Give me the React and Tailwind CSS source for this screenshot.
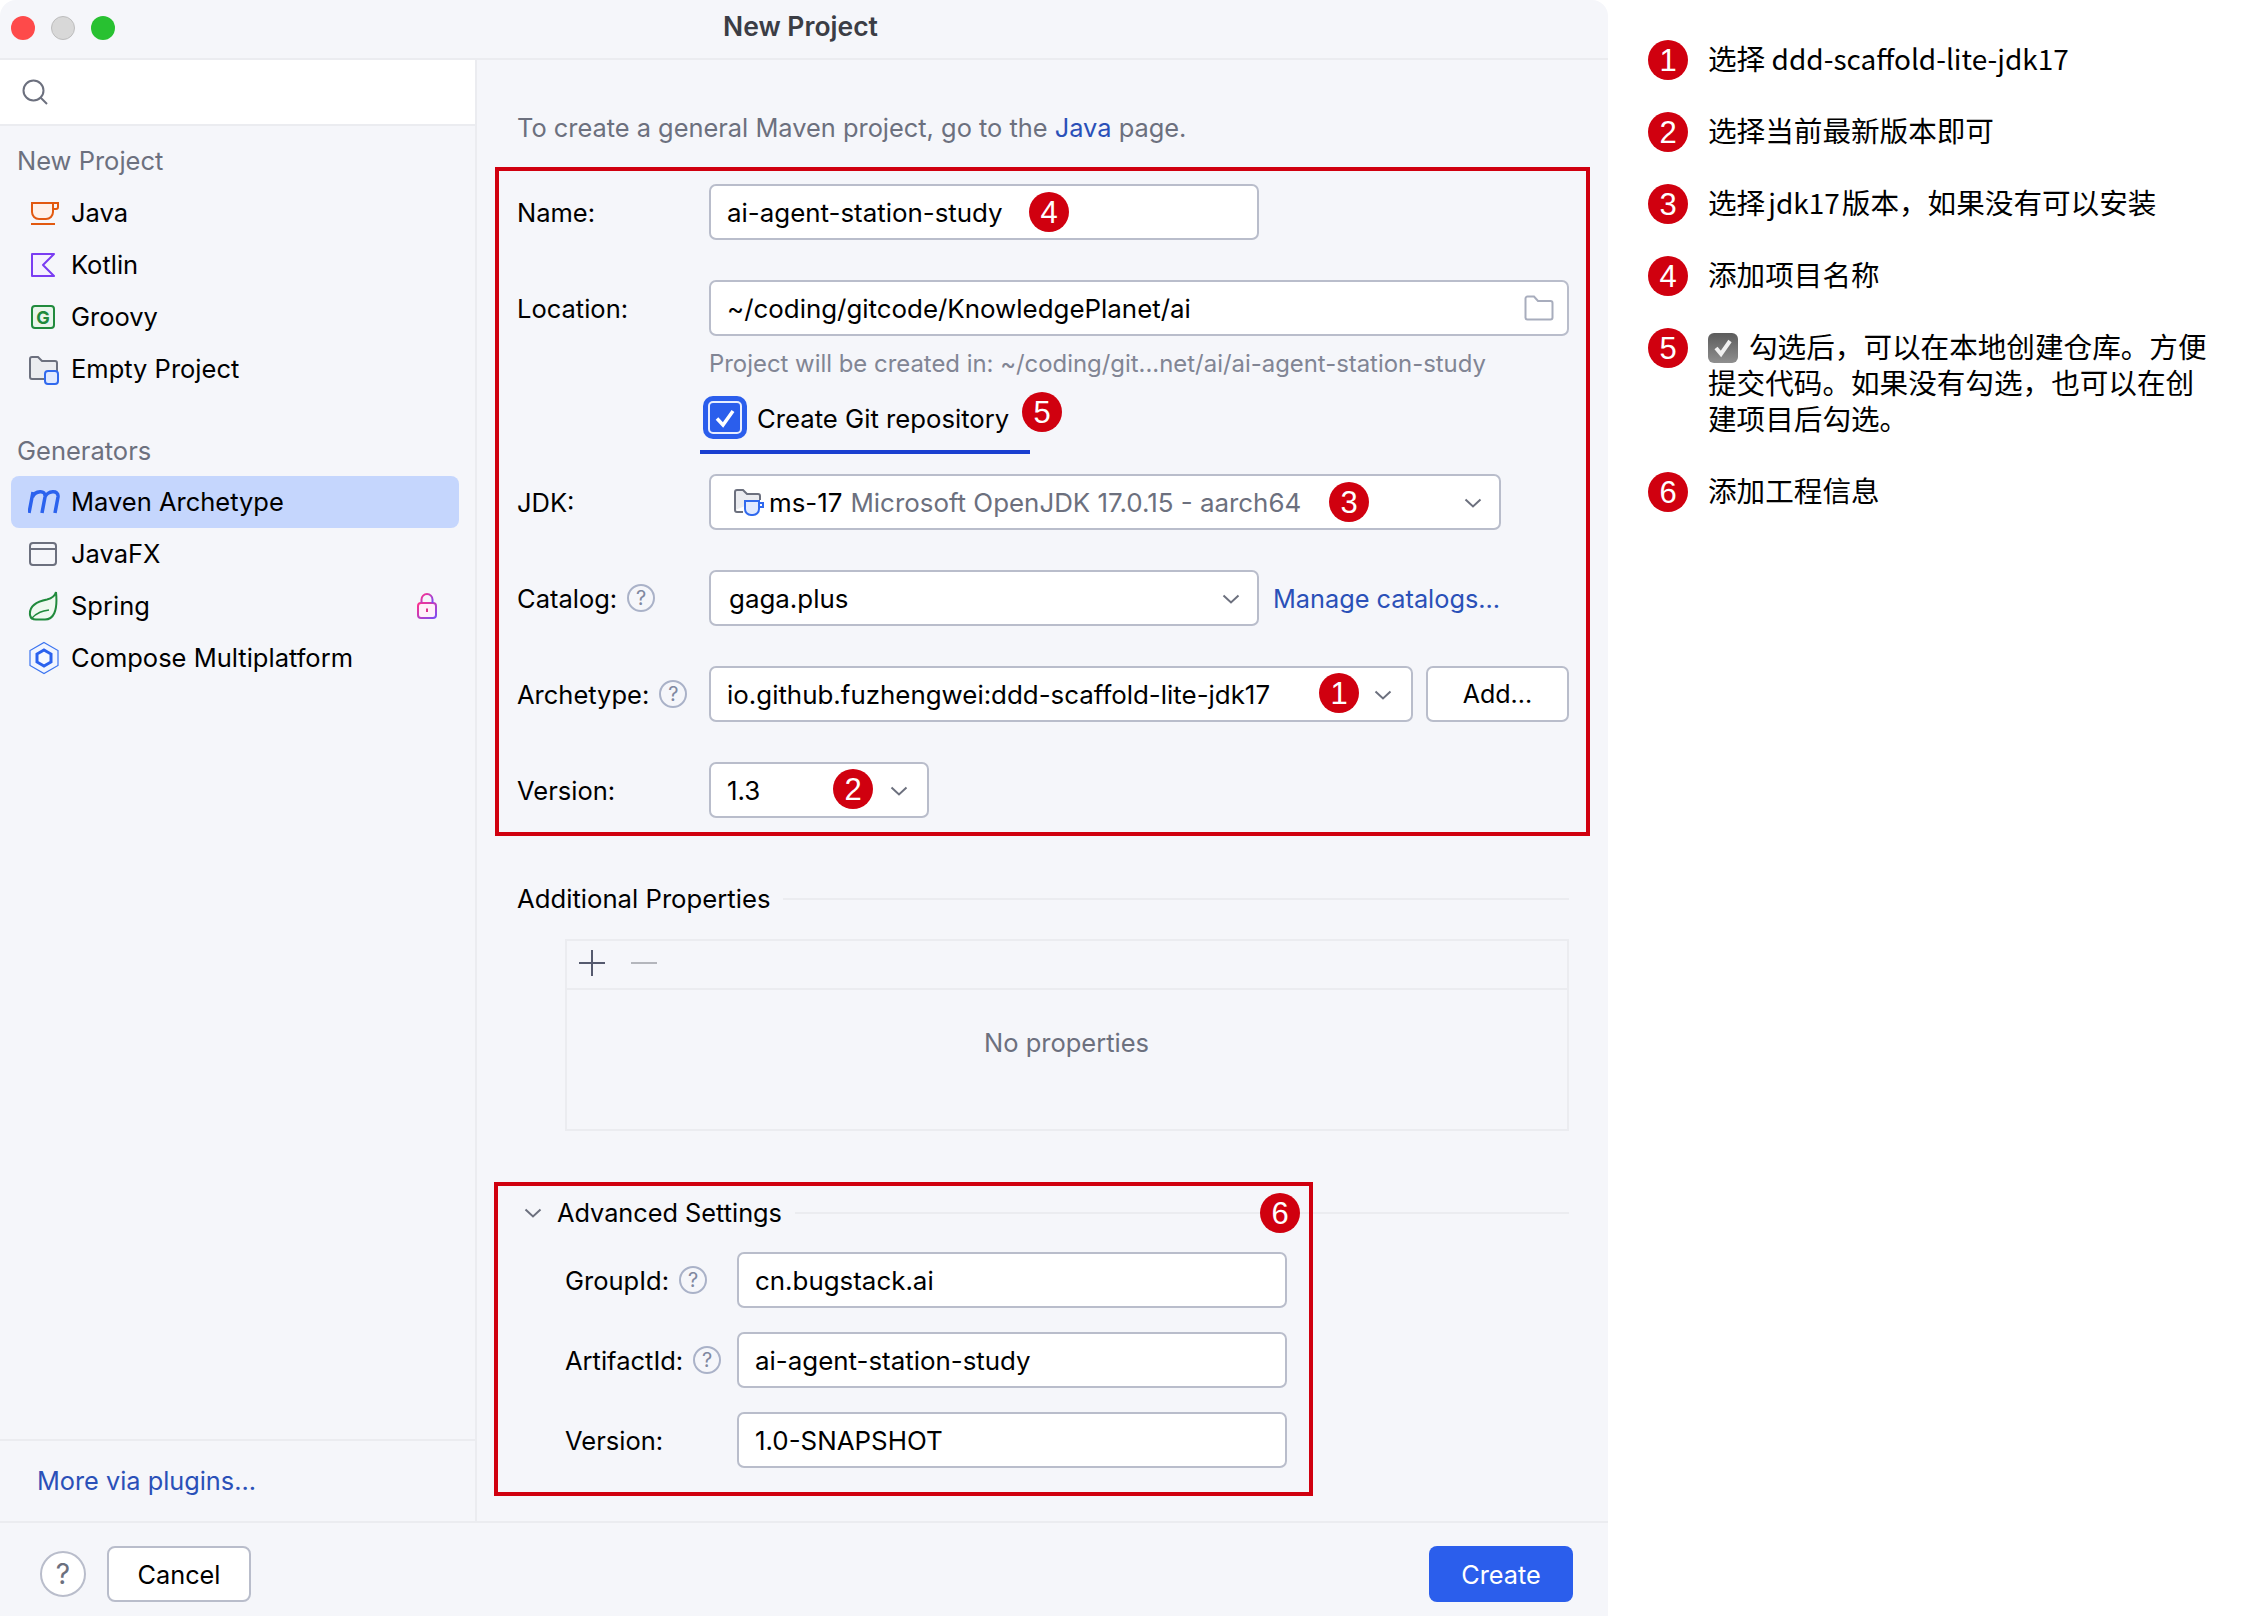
import React from 'react';

const Badge = ({ n, className = '' }) => (
  <div className={`w-[40px] h-[40px] rounded-full bg-[#d0000f] text-white flex items-center justify-center text-[31px] leading-none font-['Liberation_Sans',sans-serif] shrink-0 ${className}`}>
    {n}
  </div>
);

const Chevron = ({ className = '' }) => (
  <svg width="18" height="10" viewBox="0 0 18 10" fill="none" className={className}>
    <path d="M1.5 1.5 L9 8.5 L16.5 1.5" stroke="#6c707e" strokeWidth="2" />
  </svg>
);

const Help = ({ className = '' }) => (
  <div className={`w-[28px] h-[28px] rounded-full border-2 border-[#aab2c8] text-[#8088a0] text-[20px] leading-none flex items-center justify-center shrink-0 ${className}`}>?</div>
);

const Field = ({ className = '', children }) => (
  <div className={`h-[56px] pt-[2px] rounded-[7px] border-2 border-[#b9bdcb] bg-white flex items-center text-[25.9px] text-black shrink-0 ${className}`}>
    {children}
  </div>
);

const Row = ({ label, help, children }) => (
  <div className="flex items-center h-[56px]">
    <div className="w-[192px] flex items-center text-[25.5px] text-black shrink-0">
      <span className="pt-[3px]">{label}</span>
      {help && <Help className="ml-[10px]" />}
    </div>
    {children}
  </div>
);

const SubRow = ({ label, help, value }) => (
  <div className="flex items-center h-[56px] pl-[48px]">
    <div className="w-[172px] flex items-center text-[25.5px] text-black shrink-0">
      <span className="pt-[3px]">{label}</span>
      {help && <Help className="ml-[10px]" />}
    </div>
    <Field className="w-[550px] pl-[16px]">{value}</Field>
  </div>
);

const JavaIcon = () => (
  <svg width="32" height="28" viewBox="0 0 32 28" fill="none">
    <path d="M4 4 H25 V13 a7 7 0 0 1 -7 7 H11 a7 7 0 0 1 -7 -7 Z" fill="#fff1e8" stroke="#e2590f" strokeWidth="2" />
    <path d="M25 4 H30 V8 a2 2 0 0 1 -2 2 H25" stroke="#e2590f" strokeWidth="2" />
    <path d="M3 25 H27" stroke="#e2590f" strokeWidth="2" />
  </svg>
);

const KotlinIcon = () => (
  <svg width="32" height="28" viewBox="0 0 32 28" fill="none">
    <path d="M4 3 H26 L15 14 L26 25 H4 Z" fill="#f5f0ff" stroke="#7a3cf2" strokeWidth="2" strokeLinejoin="round" />
  </svg>
);

const GroovyIcon = () => (
  <svg width="32" height="28" viewBox="0 0 32 28" fill="none">
    <rect x="4" y="3" width="22" height="22" rx="3" fill="#e9f5eb" stroke="#208a3c" strokeWidth="2" />
    <text x="15" y="20.5" textAnchor="middle" fontSize="18" fontWeight="700" fill="#208a3c" fontFamily="Inter">G</text>
  </svg>
);

const EmptyIcon = () => (
  <svg width="32" height="32" viewBox="0 0 32 32" fill="none" className="mt-[4px]">
    <path d="M2 21 V4 a2 2 0 0 1 2 -2 H10 L14 6 H27 a2 2 0 0 1 2 2 V24 H4 a2 2 0 0 1 -2 -2 Z" fill="#ebecf0" stroke="#6c707e" strokeWidth="2" />
    <rect x="17" y="16" width="13" height="13" rx="3" fill="#e0e9ff" stroke="#3069ee" strokeWidth="2" />
  </svg>
);

const MavenIcon = () => (
  <svg width="32" height="28" viewBox="0 0 32 28" fill="none">
    <path d="M1 25 L5 4 M4.500 9 C7 3 18 1 17 9 L14 25 M17 9 C19 3 31 1 30 9 L27 25" stroke="#2b62ee" strokeWidth="3.500" />
  </svg>
);

const FxIcon = () => (
  <svg width="32" height="28" viewBox="0 0 32 28" fill="none">
    <rect x="2" y="3" width="26" height="22" rx="3" stroke="#6c707e" strokeWidth="2" />
    <path d="M2 9 H28" stroke="#6c707e" strokeWidth="2" />
  </svg>
);

const SpringIcon = () => (
  <svg width="32" height="32" viewBox="0 0 32 32" fill="none">
    <path d="M28 2 C27 6 25 8 19 9.500 C9 11.500 1 16 2 25 C2.500 28 5 29.500 8 29.500 H17 C25 29.500 30 22 28 2 Z" fill="#eff9f0" stroke="#208a3c" strokeWidth="2" />
    <path d="M3 29 C9 22 15 21 21 20" stroke="#208a3c" strokeWidth="1.500" />
  </svg>
);

const ComposeIcon = () => (
  <svg width="32" height="34" viewBox="0 0 32 34" fill="none">
    <path d="M16 1.500 L30 9.500 V24.500 L16 32.500 L2 24.500 V9.500 Z" fill="#f1f5ff" stroke="#3a73f0" strokeWidth="1.200" />
    <path d="M16 9 L23 13 V21 L16 25 L9 21 V13 Z" fill="#f7f9ff" stroke="#2b62ee" strokeWidth="3" />
  </svg>
);

const LockIcon = () => (
  <svg width="20" height="26" viewBox="0 0 20 26" fill="none">
    <defs>
      <linearGradient id="lockg" x1="0" y1="0" x2="1" y2="1">
        <stop offset="0" stopColor="#ff318c" />
        <stop offset="1" stopColor="#7a4cf5" />
      </linearGradient>
    </defs>
    <rect x="1" y="10" width="18" height="15" rx="3" fill="#fff0fa" stroke="url(#lockg)" strokeWidth="2" />
    <path d="M4.500 10 V6.500 a5.500 5.500 0 0 1 11 0 V10" stroke="url(#lockg)" strokeWidth="2" />
    <path d="M10 15.500 V19" stroke="#e0318c" strokeWidth="2" />
  </svg>
);

const items1 = [
  ['Java', <JavaIcon />],
  ['Kotlin', <KotlinIcon />],
  ['Groovy', <GroovyIcon />],
  ['Empty Project', <EmptyIcon />],
];
const items2 = [
  ['Maven Archetype', <MavenIcon />, true],
  ['JavaFX', <FxIcon />],
  ['Spring', <SpringIcon />],
  ['Compose Multiplatform', <ComposeIcon />],
];

const NavItem = ({ name, icon, active, lock }) => (
  <div className={`h-[52px] ml-[11px] mr-[16px] rounded-[8px] flex items-center pl-[17px] gap-[11px] text-[25.5px] text-black ${active ? 'bg-[#c5d6fd]' : ''}`}>
    <div className="w-[32px] flex items-center justify-center shrink-0">{icon}</div>
    <span className="flex-1 pt-[1px]">{name}</span>
    {lock && <div className="mr-[22px] flex"><LockIcon /></div>}
  </div>
);

const Sidebar = () => (
  <div className="w-[477px] border-r-2 border-[#ebecf0] flex flex-col shrink-0">
    <div className="h-[66px] bg-white border-b-2 border-[#ebecf0] flex items-center pl-[22px] shrink-0">
      <svg width="26" height="26" viewBox="0 0 26 26" fill="none">
        <circle cx="11.500" cy="11.500" r="10" stroke="#6c707e" strokeWidth="2" />
        <path d="M18.500 18.500 L25 25" stroke="#6c707e" strokeWidth="2" />
      </svg>
    </div>
    <div className="h-[34px] mt-[18px] mb-[9px] pl-[17px] text-[25.5px] leading-[34px] text-[#6c707e]">New Project</div>
    {items1.map(([name, icon]) => <NavItem key={name} name={name} icon={icon} />)}
    <div className="h-[34px] mt-[39px] mb-[8px] pl-[17px] text-[25.5px] leading-[34px] text-[#6c707e]">Generators</div>
    {items2.map(([name, icon, active]) => <NavItem key={name} name={name} icon={icon} active={active} lock={name === 'Spring'} />)}
    <div className="mt-auto h-[82px] border-t-2 border-[#ebecf0] flex items-center pl-[37px] text-[25.3px] text-[#2a50b8]">More via plugins...</div>
  </div>
);

const Form = () => (
  <div className="flex-1 pl-[40px] pr-[39px] pt-[51px]">
    <div className="h-[34px] text-[25.4px] leading-[34px] text-[#6c707e]">
      To create a general Maven project, go to the <span className="text-[#2a50b8]">Java</span> page.
    </div>

    <div className="mt-[39px]">
      <Row label="Name:"><Field className="w-[550px] pl-[16px]">ai-agent-station-study</Field></Row>
    </div>
    <div className="mt-[40px]">
      <Row label="Location:">
        <Field className="w-[860px] pl-[16px] pr-[13px] justify-between">
          <span>~/coding/gitcode/KnowledgePlanet/ai</span>
          <svg width="30" height="26" viewBox="0 0 30 26" fill="none" className="-mt-[2px]">
            <path d="M1.500 23 V3.500 a2 2 0 0 1 2 -2 H10 L14 6 H26.500 a2 2 0 0 1 2 2 V22.500 a2 2 0 0 1 -2 2 H3.500 a2 2 0 0 1 -2 -2 Z" stroke="#a8adbd" strokeWidth="2" />
          </svg>
        </Field>
      </Row>
    </div>
    <div className="mt-[11px] h-[34px] pl-[192px] text-[23.9px] leading-[34px] text-[#818594]">Project will be created in: ~/coding/git...net/ai/ai-agent-station-study</div>
    <div className="mt-[15px] h-[43px] pl-[186px] flex items-center">
      <div className="w-[44px] h-[43px] rounded-[10px] bg-[#2b5eec] flex items-center justify-center">
        <div className="w-[34px] h-[33px] rounded-[5px] border-2 border-[#e8eeff] flex items-center justify-center">
          <svg width="22" height="20" viewBox="0 0 22 20" fill="none">
            <path d="M3 10.500 L9 17 L19 3" stroke="white" strokeWidth="3.500" />
          </svg>
        </div>
      </div>
      <span className="ml-[10px] pt-[4px] text-[25.7px] text-black">Create Git repository</span>
    </div>
    <div className="mt-[35px]">
      <Row label="JDK:">
        <Field className="w-[792px] pl-[22px] pr-[17px]">
          <svg width="32" height="30" viewBox="0 0 32 30" fill="none" className="mr-[4px]">
            <path d="M2 22 V4 a2 2 0 0 1 2 -2 H10 L14 6 H25 a2 2 0 0 1 2 2 V12" fill="#ebecf0" stroke="#6c707e" strokeWidth="2" />
            <path d="M2 22 a2 2 0 0 0 2 2 H10" stroke="#6c707e" strokeWidth="2" />
            <path d="M12 13 H26 V21 a6 6 0 0 1 -6 6 H18 a6 6 0 0 1 -6 -6 Z" fill="#e0e9ff" stroke="#3069ee" strokeWidth="2" />
            <path d="M26 15 H30 V19 H26" stroke="#3069ee" strokeWidth="2" />
          </svg>
          <span>ms-17</span>
          <span className="ml-[8px] text-[#6c707e]">Microsoft OpenJDK 17.0.15 - aarch64</span>
          <Chevron className="ml-auto" />
        </Field>
      </Row>
    </div>
    <div className="mt-[40px]">
      <Row label="Catalog:" help>
        <Field className="w-[550px] pl-[18px] pr-[17px]">
          <span>gaga.plus</span>
          <Chevron className="ml-auto" />
        </Field>
        <span className="ml-[14px] pt-[1px] text-[25.3px] text-[#2a50b8]">Manage catalogs...</span>
      </Row>
    </div>
    <div className="mt-[40px]">
      <Row label="Archetype:" help>
        <Field className="w-[704px] pl-[16px] pr-[19px]">
          <span>io.github.fuzhengwei:ddd-scaffold-lite-jdk17</span>
          <Chevron className="ml-auto" />
        </Field>
        <Field className="ml-[13px] w-[143px] justify-center text-[25px]">Add...</Field>
      </Row>
    </div>
    <div className="mt-[40px]">
      <Row label="Version:">
        <Field className="w-[220px] pl-[16px] pr-[19px]">
          <span>1.3</span>
          <Chevron className="ml-auto" />
        </Field>
      </Row>
    </div>

    <div className="mt-[64px] h-[34px] flex items-center gap-[13px] text-[25.7px] text-black">
      <span>Additional Properties</span>
      <div className="flex-1 h-[2px] bg-[#ebecf0]" />
    </div>
    <div className="mt-[23px] ml-[48px] h-[192px] border-2 border-[#ebecf0] flex flex-col">
      <div className="h-[49px] pb-[3px] border-b-2 border-[#ebecf0] flex items-center pl-[12px] gap-[26px] shrink-0">
        <svg width="26" height="26" viewBox="0 0 26 26" fill="none">
          <path d="M13 0 V26 M0 13 H26" stroke="#555a6e" strokeWidth="2" />
        </svg>
        <svg width="26" height="26" viewBox="0 0 26 26" fill="none">
          <path d="M0 13 H26" stroke="#b4b6bc" strokeWidth="2" />
        </svg>
      </div>
      <div className="flex-1 pb-[33px] flex items-center justify-center text-[25.5px] text-[#6c707e]">
        <span className="-ml-[1px]">No properties</span>
      </div>
    </div>

    <div className="mt-[65px] h-[34px] flex items-center text-[25.3px] text-black">
      <Chevron className="ml-[7px] mr-[15px]" />
      <span>Advanced Settings</span>
      <div className="ml-[13px] flex-1 h-[2px] bg-[#ebecf0]" />
    </div>
    <div className="mt-[22px] flex flex-col gap-[24px]">
      <SubRow label="GroupId:" help value="cn.bugstack.ai" />
      <SubRow label="ArtifactId:" help value="ai-agent-station-study" />
      <SubRow label="Version:" value="1.0-SNAPSHOT" />
    </div>
  </div>
);

const Note = ({ n, className = 'h-[40px]', children }) => (
  <div className={`flex gap-[20px] ${className}`}>
    <Badge n={n} />
    <div className="text-[28.6px] leading-[36px] text-black whitespace-nowrap">{children}</div>
  </div>
);

export default function App() {
  return (
    <div className="relative w-[2248px] h-[1616px] bg-white flex overflow-hidden font-['Inter','Noto_Sans_CJK_SC',sans-serif]">
      <div className="w-[1608px] h-[1616px] bg-[#f5f6fa] rounded-tl-[16px] rounded-tr-[16px] flex flex-col shrink-0">
        <div className="h-[60px] pb-[2px] border-b-2 border-[#ebecf0] flex items-center shrink-0">
          <div className="flex gap-[16px] pl-[11px]">
            <div className="w-[24px] h-[24px] rounded-full bg-[#fe4a4a]" />
            <div className="w-[24px] h-[24px] rounded-full bg-[#d8d8d8] border border-[#bdbdbd]" />
            <div className="w-[24px] h-[24px] rounded-full bg-[#28c131]" />
          </div>
          <div className="flex-1 mb-[2px] text-center text-[26.5px] font-semibold text-[#3b3d45] pr-[122px]">New Project</div>
        </div>
        <div className="flex-1 flex min-h-0">
          <Sidebar />
          <Form />
        </div>
        <div className="h-[95px] border-t-2 border-[#ebecf0] flex items-start justify-between pt-[23px] pl-[40px] pr-[35px] shrink-0">
          <div className="flex items-start gap-[21px]">
            <div className="mt-[5px] w-[46px] h-[46px] rounded-full border-2 border-[#b9bdcb] bg-white text-[#6c707e] text-[28px] flex items-center justify-center">?</div>
            <div className="w-[144px] h-[56px] pt-[1px] rounded-[8px] border-2 border-[#b9bdcb] bg-white text-[25.3px] text-black flex items-center justify-center">Cancel</div>
          </div>
          <div className="w-[144px] h-[56px] pt-[1px] rounded-[8px] bg-[#2b5eec] text-[25.3px] text-white flex items-center justify-center">Create</div>
        </div>
      </div>

      <div className="flex-1 pl-[40px] pt-[40px] flex flex-col gap-[32px] font-['Noto_Sans_CJK_SC','Inter',sans-serif]">
        <Note n="1">选择 <span className="text-[28px]">ddd-scaffold-lite-jdk17</span></Note>
        <Note n="2">选择当前最新版本即可</Note>
        <Note n="3">选择<span className="text-[28px] ml-[3px] mr-[2px]">jdk17</span>版本，如果没有可以安装</Note>
        <Note n="4">添加项目名称</Note>
        <Note n="5" className="h-[112px]">
          <span className="inline-flex align-[-1px] w-[30px] h-[30px] rounded-[6px] bg-gradient-to-b from-[#5c5c5c] to-[#8f8f8f] items-center justify-center mr-[11px]">
            <svg width="22" height="22" viewBox="0 0 22 22" fill="none">
              <path d="M4 11 L9 17 L18 4" stroke="#f0f0f0" strokeWidth="4" />
            </svg>
          </span>
          勾选后，可以在本地创建仓库。方便<br />提交代码。如果没有勾选，也可以在创<br />建项目后勾选。
        </Note>
        <Note n="6">添加工程信息</Note>
      </div>

      {/* annotations drawn on top of the dialog */}
      <div className="absolute left-[495px] top-[167px] w-[1095px] h-[669px] border-4 border-[#d0000f]" />
      <div className="absolute left-[494px] top-[1182px] w-[819px] h-[314px] border-4 border-[#d0000f]" />
      <div className="absolute left-[700px] top-[450px] w-[330px] h-[4px] bg-[#1a3fd0]" />
      <Badge n="4" className="absolute left-[1029px] top-[192px]" />
      <Badge n="5" className="absolute left-[1022px] top-[392px]" />
      <Badge n="3" className="absolute left-[1329px] top-[482px]" />
      <Badge n="1" className="absolute left-[1319px] top-[673px]" />
      <Badge n="2" className="absolute left-[833px] top-[769px]" />
      <Badge n="6" className="absolute left-[1260px] top-[1193px]" />
    </div>
  );
}
